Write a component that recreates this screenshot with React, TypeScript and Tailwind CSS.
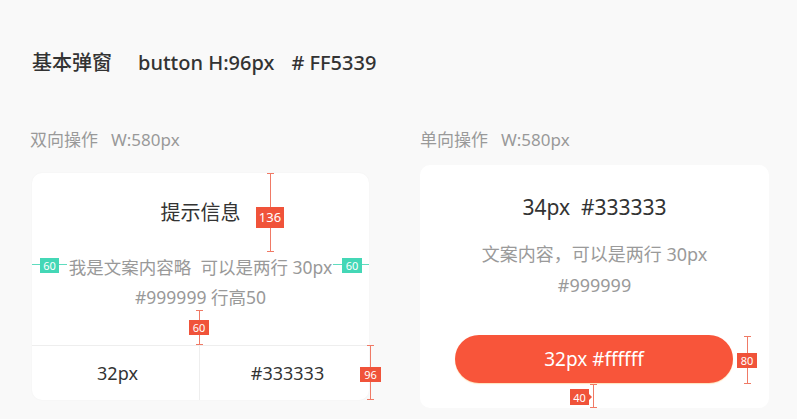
import React from 'react';

const FONT = "font-['Noto_Sans','Noto_Sans_CJK_SC',sans-serif]";

// vertical measurement line with small caps on both ends
function VLine({ className }: { className: string }) {
  return (
    <div className={`absolute w-[7px] ${className}`}>
      <div className="absolute left-[3px] top-0 bottom-0 w-px bg-[#f07a66]" />
      <div className="absolute left-0 top-0 w-[7px] h-px bg-[#f07a66]" />
      <div className="absolute left-0 bottom-0 w-[7px] h-px bg-[#f07a66]" />
    </div>
  );
}

function HLine({ className }: { className: string }) {
  return (
    <div className={`absolute h-[7px] ${className}`}>
      <div className="absolute top-[3px] left-0 right-0 h-px bg-[#5fdcbf]" />
    </div>
  );
}

function Tag({ children, className, green }: { children: React.ReactNode; className: string; green?: boolean }) {
  return (
    <div
      className={`absolute flex items-center justify-center text-white leading-none ${
        green ? 'bg-[#44d7b6]' : 'bg-[#f0533a]'
      } ${className}`}
    >
      {children}
    </div>
  );
}

export default function App() {
  return (
    <div className={`w-[797px] h-[419px] overflow-hidden bg-[#f9f9f9] ${FONT}`}>
      <div className="pl-[32px] pt-[51px] flex items-center text-[20px] leading-[24px] text-[#333] font-medium">
        <span>基本弹窗</span>
        <span className="ml-[26px]">button H:96px</span>
        <span className="ml-[17px]">#&nbsp;FF5339</span>
      </div>

      <div className="flex mt-[53px]">
        {/* 双向操作 */}
        <div className="w-[420px] pl-[30px]">
          <div className="text-[17px] leading-[24px] text-[#999]">
            双向操作<span className="ml-[13px]">W:580px</span>
          </div>
          <div className="relative ml-[2px] mt-[21px] w-[337px] h-[227px] rounded-[10px] bg-white shadow-[0_0_2px_rgba(0,0,0,0.04)]">
            <div className="h-[172px] flex flex-col items-center pt-[26px]">
              <div className="text-[20px] leading-[28px] text-[#333]">提示信息</div>
              <div className="mt-[25px] text-[17.5px] leading-[30px] text-[#999] text-center">
                <div>我是文案内容略&nbsp;&nbsp;可以是两行 30px</div>
                <div>#999999 行高50</div>
              </div>
            </div>
            <div className="h-[55px] flex border-t border-[#eee] text-[18px] text-[#333]">
              <div className="flex-1 flex items-center justify-center border-r border-[#eee] pl-[4px]">32px</div>
              <div className="flex-1 flex items-center justify-center pl-[6px]">#333333</div>
            </div>

            <VLine className="left-[235px] top-0 h-[79px]" />
            <Tag className="left-[224px] top-[34px] w-[28px] h-[21px] text-[13px]">136</Tag>

            <HLine className="left-0 top-[88px] w-[35px]" />
            <Tag green className="left-[8px] top-[85px] w-[19px] h-[15px] text-[11px]">60</Tag>
            <HLine className="left-[301px] top-[88px] w-[36px]" />
            <Tag green className="left-[310px] top-[85px] w-[20px] h-[15px] text-[11px]">60</Tag>

            <VLine className="left-[164px] top-[137px] h-[35px]" />
            <Tag className="left-[157px] top-[147px] w-[20px] h-[15px] text-[11px]">60</Tag>

            <VLine className="left-[335px] top-[172px] h-[55px]" />
            <Tag className="left-[328px] top-[194px] w-[21px] h-[15px] text-[11px]">96</Tag>
          </div>
        </div>

        {/* 单向操作 */}
        <div className="w-[377px]">
          <div className="text-[17px] leading-[24px] text-[#999]">
            单向操作<span className="ml-[13px]">W:580px</span>
          </div>
          <div className="relative mt-[13px] w-[349px] h-[243px] rounded-[10px] bg-white flex flex-col items-center pt-[28px]">
            <div className="text-[21px] leading-[28px] text-[#333]">34px&nbsp;&nbsp;#333333</div>
            <div className="mt-[18px] text-[18px] leading-[31px] text-[#9a9a9a] text-center">
              <div>文案内容，可以是两行 30px</div>
              <div>#999999</div>
            </div>
            <div className="mt-[34px] ml-[-1px] w-[278px] h-[48px] rounded-full bg-[#f8553a] shadow-[0_1px_1px_rgba(255,200,120,0.5)] flex items-center justify-center text-[19px] text-white">
              32px #ffffff
            </div>

            <VLine className="left-[324px] top-[171px] h-[48px]" />
            <Tag className="left-[317px] top-[188px] w-[20px] h-[15px] text-[11px]">80</Tag>

            <VLine className="left-[170px] top-[219px] h-[24px]" />
            <Tag className="left-[150px] top-[224px] w-[19px] h-[16px] text-[11px]">40</Tag>
            <div className="absolute left-[169px] top-[229px] w-0 h-0 border-y-[3px] border-y-transparent border-l-[3px] border-l-[#f0533a]" />
          </div>
        </div>
      </div>
    </div>
  );
}
